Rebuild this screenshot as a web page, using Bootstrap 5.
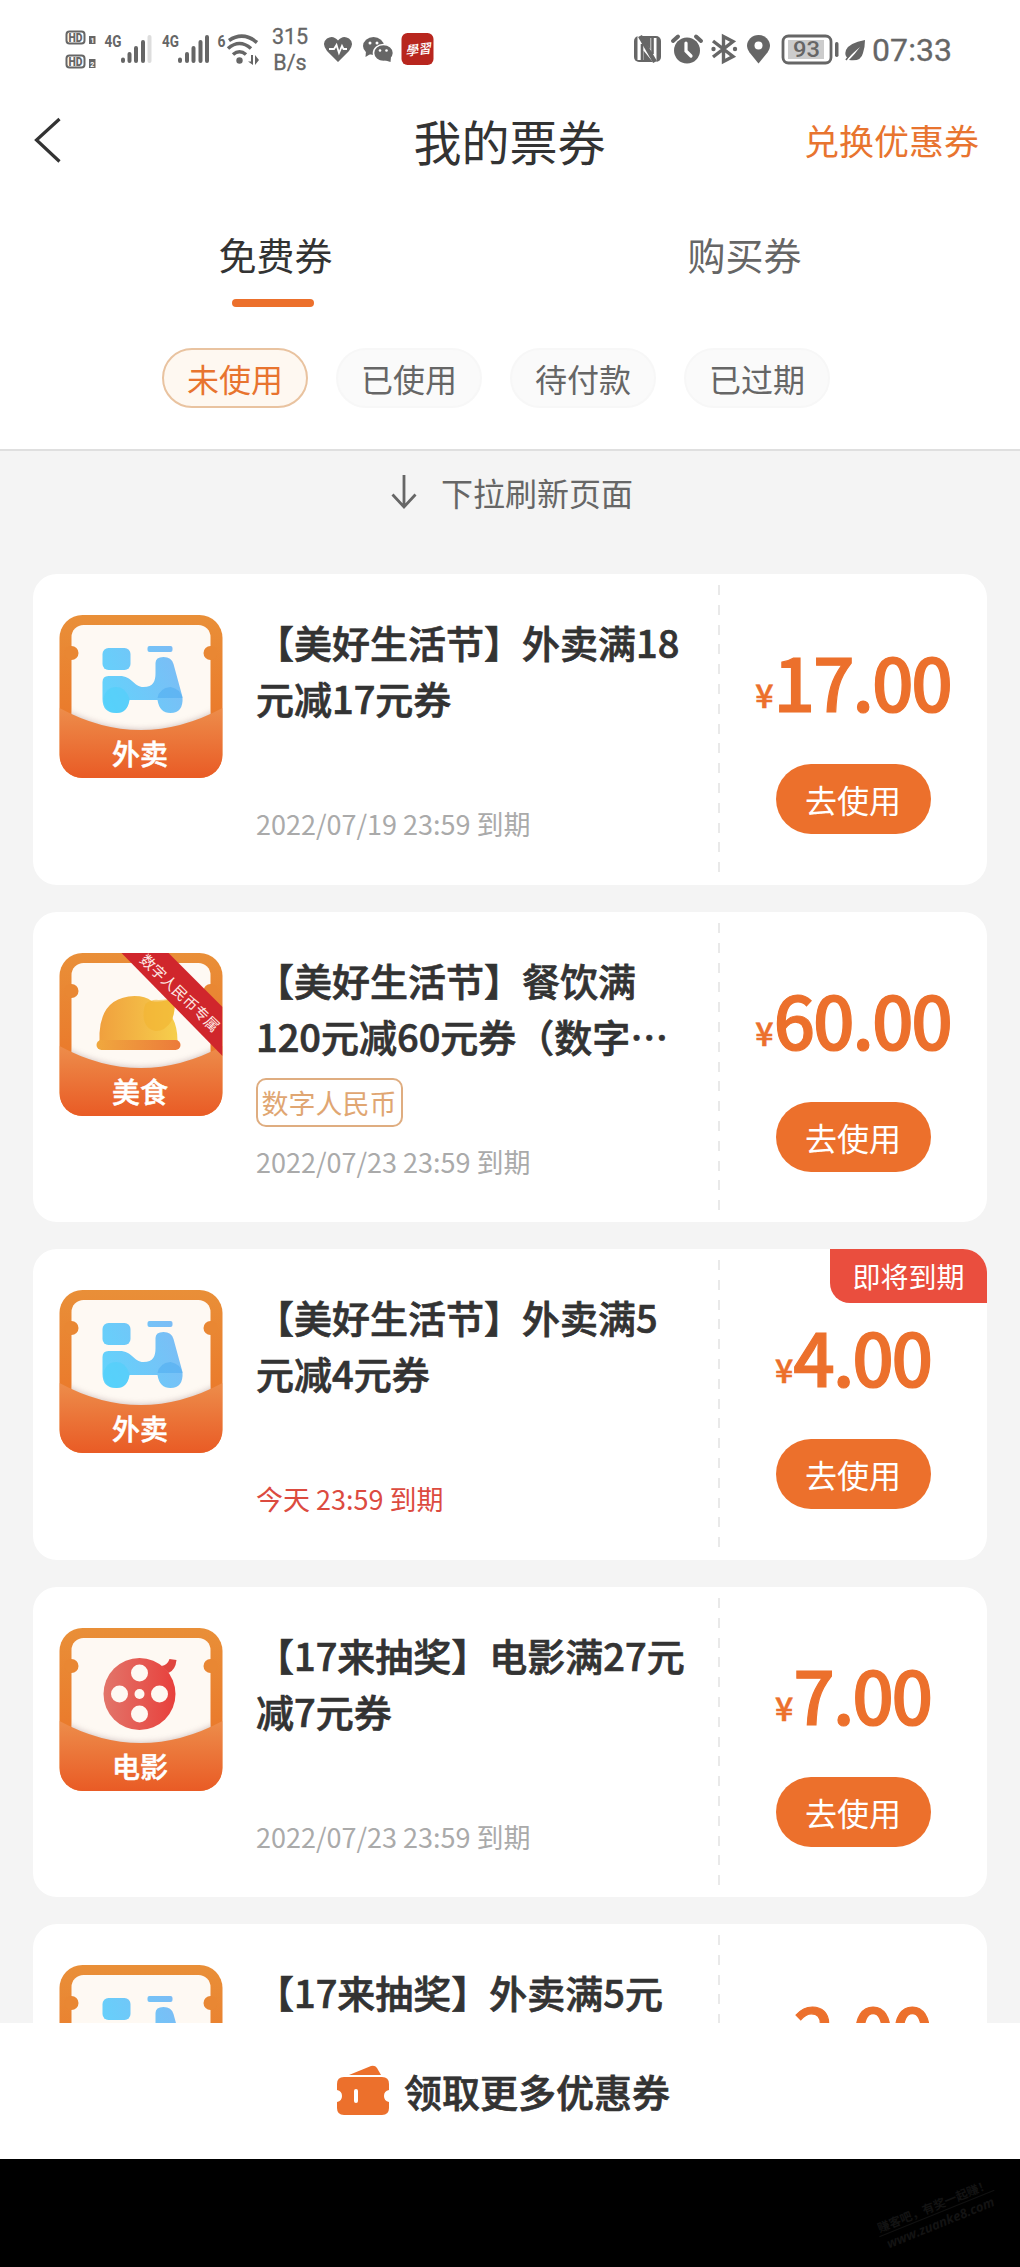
<!DOCTYPE html>
<html lang="zh-CN">
<head>
<meta charset="utf-8">
<meta name="viewport" content="width=device-width, initial-scale=1">
<title>我的票券</title>
<link href="https://cdn.jsdelivr.net/npm/bootstrap@5.3.0/dist/css/bootstrap.min.css" rel="stylesheet">
<style>
  body { width: 1020px; height: 2267px; overflow: hidden; background: #f4f4f4; color: #333;
    font-family: "Noto Sans CJK SC", "Noto Sans", sans-serif; line-height: 1; }
  svg { display: block; flex: none; }
  .statusbar { height: 100px; font-family: Roboto, sans-serif; color: #666; }
  .statusbar svg { fill: #666; }
  .statusbar svg text { font-family: "Roboto", sans-serif; }
  .net-speed { font-size: 21.5px; line-height: 25.5px; width: 40px; -webkit-text-stroke: .3px #666; }
  .clock { font-size: 32px; letter-spacing: .1px; -webkit-text-stroke: .3px #666; }
  .titlebar { height: 79px; display: grid; grid-template-columns: 1fr auto 1fr; padding: 0 41px 0 34px; }
  .titlebar h1 { font-size: 48px; font-weight: 400; line-height: 76px; padding-left: 6px; }
  .exchange { color: #e8742f; font-size: 35px; text-decoration: none; line-height: 76px; white-space: nowrap; }
  .tabs { padding: 0 41px; height: 169px; }
  .tabs a { width: 469px; font-size: 38px; line-height: 56px; padding-top: 47px; color: #666; text-decoration: none; text-align: center; }
  .tabs a.active { color: #333; }
  .tabs a.active::after { content: ""; display: block; width: 82px; height: 8px; border-radius: 4px; background: #ec702c; margin: 17px auto 0 191px; }
  .filters { gap: 28px; padding-left: 162px; height: 101px; }
  .pill { width: 146px; height: 60px; border-radius: 30px; font-size: 32px; line-height: 56px; padding: 0; text-align: center; background: #fafafa; border: 2px solid #f7f7f7; color: #666; }
  .pill.active { background: #fef8f1; border-color: #e9c3a0; color: #e8742f; }
  .topbox { height: 451px; border-bottom: 2px solid #dfdfdf; }
  .refresh { height: 123px; padding: 24px 0 0 391px; font-size: 32px; line-height: 34px; color: #666; }
  .coupons { height: 1449px; overflow: hidden; padding: 0 33px; }
  .coupon { height: 310.5px; flex: none; background: #fff; border-radius: 24px; margin-bottom: 27px; }
  .coupon-icon { margin: 41px 33px 0 26px; }
  .coupon-icon text { font-family: "Noto Sans CJK SC", sans-serif; }
  .tile-name { fill: #fff; font-size: 28px; font-weight: 500; text-anchor: middle; stroke: #fff; stroke-width: .5px; }
  .info { width: 462px; padding-top: 40px; height: 310px; }
  .info h2 { font-size: 38px; line-height: 56px; font-weight: 500; margin: 0; white-space: nowrap; height: 112px; -webkit-text-stroke: .7px #333; }
  .expire { font-size: 27px; line-height: 32px; color: #aaa; margin-bottom: 44px; }
  .expire.soon { color: #dc4b3f; }
  .digital { font-size: 27px; color: #e0a672; border: 2px solid #dfad80; border-radius: 10px; width: 147px; height: 49px; line-height: 46px; text-align: center; margin-top: 14px; text-indent: -1px; }
  .cutline { width: 2px; height: 290px; margin-top: 11px; background: repeating-linear-gradient(#e9e9e9 0 10px, transparent 10px 19.8px); }
  .pay { width: 266px; padding-top: 61px; }
  .price { color: #ec702c; font-weight: 500; height: 129px; line-height: 90px; white-space: nowrap; -webkit-text-stroke: 1.2px #ec702c; }
  .price small { font-size: 32px; position: relative; top: -4px; -webkit-text-stroke-width: .6px; }
  .price span { font-size: 73px; letter-spacing: -2.2px; }
  .use { background: #ec702c; color: #fff; border: 0; width: 155px; height: 70px; border-radius: 35px; font-size: 32px; line-height: 71px; padding: 0; font-weight: 400; }
  .use:hover { background: #ec702c; color: #fff; }
  .flag { top: 0; right: 0; width: 157px; height: 54px; background: #ea4e3e; color: #fff; font-size: 28px; line-height: 55px; border-radius: 0 24px 0 20px; text-align: center; }
  .more { height: 136px; background: #fff; padding-left: 337px; font-size: 38px; font-weight: 500; -webkit-text-stroke: .7px #333; }
  .wallet { margin-right: 14px; }
  .navarea { height: 108px; background: #000; position: relative; }
  .stamp { position: absolute; left: 875px; top: 37px; width: 124px; color: #131313; transform: rotate(-22deg); font-weight: 700; white-space: nowrap; text-align: center; }
  .stamp div:first-child { font-size: 12px; line-height: 17px; border-bottom: 1px solid #111; }
  .stamp div:last-child { font: italic 700 13px/18px "Open Sans", sans-serif; }
</style>
</head>
<body>
<svg width="0" height="0" class="position-absolute">
  <defs>
    <linearGradient id="gBack" x1="0" y1="0" x2="0" y2="1"><stop offset="0" stop-color="#e98f38"/><stop offset=".6" stop-color="#ea7b2c"/></linearGradient>
    <linearGradient id="gFront" x1="0" y1="0" x2="0" y2="1"><stop offset="0" stop-color="#ed8d4b"/><stop offset="1" stop-color="#e95b25"/></linearGradient>
    <linearGradient id="gBlue" gradientUnits="userSpaceOnUse" x1="43" y1="90" x2="124" y2="50"><stop offset="0" stop-color="#62d4fc"/><stop offset="1" stop-color="#7cbcf5"/></linearGradient>
    <linearGradient id="gFood" x1="0" y1="0" x2="1" y2="0"><stop offset="0" stop-color="#f0a03e"/><stop offset="1" stop-color="#f6cf4c"/></linearGradient>
    <linearGradient id="gPlate" x1="0" y1="0" x2="1" y2="0"><stop offset="0" stop-color="#f0a83e"/><stop offset="1" stop-color="#ec7a3a"/></linearGradient>
    <linearGradient id="gFilm" x1="0" y1="0" x2="1" y2="0"><stop offset="0" stop-color="#e2756a"/><stop offset="1" stop-color="#e8403c"/></linearGradient>
    <clipPath id="tile"><rect width="163" height="163" rx="23"/></clipPath>
    <clipPath id="card"><rect x="12" y="10" width="139" height="120" rx="12"/></clipPath>
    <filter id="soft" x="-10%" y="-30%" width="120%" height="160%"><feGaussianBlur stdDeviation="3"/></filter>
    <g id="ticketBack">
      <rect width="163" height="163" rx="23" fill="url(#gBack)"/>
      <rect x="12" y="10" width="139" height="120" rx="12" fill="#fef9f3"/>
      <circle cx="12" cy="38" r="7" fill="#e98733"/><circle cx="151" cy="38" r="7" fill="#e98733"/>
      <g clip-path="url(#card)"><path d="M0 93Q81 137 163 93V130H0Z" fill="#b9a5a5" opacity=".75" filter="url(#soft)"/></g>
    </g>
    <g id="ticketFront" clip-path="url(#tile)"><path d="M0 93Q81 137 163 93V163H0Z" fill="url(#gFront)"/></g>
    <g id="scooter" fill="url(#gBlue)">
      <rect x="43" y="33" width="28" height="22" rx="6"/>
      <rect x="88" y="31" width="25" height="6" rx="2"/>
      <path d="M49 61H60C73 61 74 72 84 72C94 72 96 66 96 58V48Q96 42 104 42Q112 42 114 49L123 82Q124 98 111 98Q100 98 98 85H70Q68 98 57 98Q43 98 43 84V67Q43 61 49 61Z"/>
      <path d="M44 84Q46 72 57 72Q66 72 70 84Q68 98 57 98Q45 98 44 84Z" fill="#4cd0fa" opacity=".55"/>
      <path d="M98 83Q100 73 111 72Q121 74 123 83Z" fill="#4aa9ef" opacity=".5"/>
    </g>
  </defs>
</svg>

<main class="topbox bg-white">
  <div class="statusbar d-flex align-items-start">
    <svg width="32" height="100" viewBox="64 0 32 100" style="margin-left:64px">
      <g fill="none" stroke="#666" stroke-width="2"><rect x="66.500" y="31.500" width="18" height="12" rx="3"/><rect x="66.500" y="55.500" width="18" height="12" rx="3"/></g>
      <text x="68.500" y="42" font-size="12" font-weight="900" textLength="14" lengthAdjust="spacingAndGlyphs">HD</text><text x="68.500" y="66" font-size="12" font-weight="900" textLength="14" lengthAdjust="spacingAndGlyphs">HD</text>
      <rect x="89" y="36" width="6.500" height="8"/><rect x="89" y="59" width="6.500" height="9"/>
      <text x="90.500" y="42.800" font-size="7" font-weight="700" style="fill:#fff">1</text><text x="90.200" y="66.500" font-size="7" font-weight="700" style="fill:#fff">2</text>
    </svg>
    <svg width="57" height="100" viewBox="96 0 57 100">
      <text x="104.500" y="47" font-size="16.500" font-weight="700" textLength="17" lengthAdjust="spacingAndGlyphs">4G</text>
      <g stroke="#666" stroke-width="4" stroke-linecap="round"><path d="M123 59.500V61M129.500 54V61M136 48V61M143 42V61"/><path d="M149.500 37V61" stroke="#ddd"/></g>
    </svg>
    <svg width="59" height="100" viewBox="153 0 59 100">
      <text x="162" y="47" font-size="16.500" font-weight="700" textLength="17" lengthAdjust="spacingAndGlyphs">4G</text>
      <g stroke="#666" stroke-width="4" stroke-linecap="round"><path d="M180 59.500V61M187 54V61M193.500 48V61M200.500 42V61M207 37V61"/></g>
    </svg>
    <svg width="58" height="100" viewBox="212 0 58 100">
      <text x="217.500" y="46.500" font-size="16.500" font-weight="700" textLength="8" lengthAdjust="spacingAndGlyphs">6</text>
      <circle cx="239.500" cy="60.500" r="3.200"/>
      <g fill="none" stroke="#666" stroke-width="3.600"><path d="M233 54.500Q239.500 49 246 54.500"/><path d="M228 48.500Q239.500 38.500 251 48.500"/><path d="M229 40.500Q243 31 257 42.500"/></g>
      <path d="M253 55V65L248 61.500H251V55ZM255 65V55L259 60Z"/>
    </svg>
    <div class="net-speed text-center" style="margin-top:24px">315<br>B/s</div>
    <svg width="51" height="100" viewBox="310 0 51 100">
      <path d="M338 62L327 51Q321 43 327 38.500Q333 34.500 338 40.500Q343 34.500 349 38.500Q355 43 349 51Z"/>
      <path d="M329 49H334L336.500 45L339 53L342 46L343.500 49H347" fill="none" stroke="#fff" stroke-width="1.800"/>
    </svg>
    <svg width="35" height="100" viewBox="361 0 35 100">
      <ellipse cx="373.500" cy="46" rx="10.500" ry="9"/><path d="M366 51L365.500 57L372 53Z"/>
      <ellipse cx="383.500" cy="53" rx="10" ry="8.500" stroke="#fff" stroke-width="1.600"/><path d="M384 60L391 57L390.500 62Z"/>
      <g fill="#fff"><circle cx="370" cy="43" r="1.500"/><circle cx="377" cy="43" r="1.500"/><circle cx="380" cy="50.500" r="1.300"/><circle cx="386.500" cy="50.500" r="1.300"/></g>
    </svg>
    <svg width="38" height="100" viewBox="396 0 38 100">
      <rect x="401.500" y="33" width="32" height="32" rx="6" fill="#b8261e"/>
      <text x="405" y="54.500" font-size="13" font-weight="500" transform="rotate(-7 417 50)" style="fill:#fff;font-family:'Noto Sans CJK SC',sans-serif;font-style:italic">學習</text>
    </svg>
    <svg width="36" height="100" viewBox="630 0 36 100" style="margin-left:196px">
      <rect x="634" y="36" width="27" height="26" rx="5"/>
      <path d="M640.500 60V42L653.500 58V38" fill="none" stroke="#fff" stroke-width="6"/><path d="M642 62V44M652.500 36V54" stroke="#666" stroke-width="2.600"/><path d="M640 36L655 62" stroke="#666" stroke-width="4.500"/>
    </svg>
    <svg width="40" height="100" viewBox="666 0 40 100">
      <circle cx="687" cy="50.500" r="13"/><path d="M673 41L678 36.500M701 41L696 36.500" stroke="#666" stroke-width="4" stroke-linecap="round"/>
      <path d="M686 43V51L691 56" fill="none" stroke="#fff" stroke-width="3.200" stroke-linecap="round"/>
    </svg>
    <svg width="36" height="100" viewBox="706 0 36 100">
      <path d="M713 41L733 56.500L723.500 61.500V36.500L733 41.500L713 57" fill="none" stroke="#666" stroke-width="3.400"/>
      <circle cx="713.500" cy="49" r="2.200"/><circle cx="735" cy="49" r="2.200"/>
    </svg>
    <svg width="32" height="100" viewBox="742 0 32 100">
      <path d="M758.500 63.500L749.500 52.500Q747 49 747 46A11.500 11 0 0 1 770 46Q770 49 767.500 52.500Z"/><circle cx="758.500" cy="45.500" r="4" style="fill:#fff"/>
    </svg>
    <svg width="67" height="100" viewBox="774 0 67 100">
      <rect x="783" y="36" width="48" height="27" rx="5.500" fill="none" stroke="#666" stroke-width="2.800" style="fill:#fff"/>
      <rect x="788" y="40" width="36" height="19" style="fill:#ccc"/>
      <text x="793" y="56.500" font-size="22.500" font-weight="500" textLength="27" lengthAdjust="spacingAndGlyphs">93</text>
      <rect x="835" y="42" width="3.500" height="15" rx="1.700"/>
    </svg>
    <svg width="31" height="100" viewBox="841 0 31 100">
      <path d="M865 40Q849 43 846 50Q844 56 848 58Q854 52 860 47Q855 54 849 60Q861 62 863 53Q865 47 865 40Z"/>
      <path d="M846 60Q848 57 850 55" stroke="#666" stroke-width="1.600"/>
    </svg>
    <div class="clock" style="margin-top:34px">07:33</div>
  </div>

  <header class="titlebar align-items-center">
    <svg width="32" height="50" viewBox="0 0 32 50"><path d="M25.500 4L2.500 25L25.500 46.500" fill="none" stroke="#333" stroke-width="3.200"/></svg>
    <h1 class="mb-0">我的票券</h1>
    <a href="#" class="exchange text-end">兑换优惠券</a>
  </header>

  <nav class="tabs d-flex">
    <a href="#" class="active">免费券</a>
    <a href="#">购买券</a>
  </nav>

  <div class="filters d-flex">
    <button class="pill active">未使用</button>
    <button class="pill">已使用</button>
    <button class="pill">待付款</button>
    <button class="pill">已过期</button>
  </div>
</main>

<div class="refresh d-flex">
  <svg width="26" height="36" viewBox="0 0 26 36" class="me-4"><path d="M13 0V31M1.500 19.500L13 32L24.500 19.500" fill="none" stroke="#666" stroke-width="2.800"/></svg>
  <span>下拉刷新页面</span>
</div>

<section class="coupons d-flex flex-column">
  <article class="coupon d-flex">
    <svg class="coupon-icon" width="164" height="163" viewBox="0 0 163 163"><use href="#ticketBack"/><use href="#scooter"/><use href="#ticketFront"/><text class="tile-name" x="80.500" y="150">外卖</text></svg>
    <div class="info d-flex flex-column justify-content-between"><h2>【美好生活节】外卖满18<br>元减17元券</h2><div class="expire">2022/07/19 23:59 到期</div></div>
    <div class="cutline"></div>
    <div class="pay text-center"><div class="price"><small>¥</small><span>17.00</span></div><button class="use btn">去使用</button></div>
  </article>

  <article class="coupon d-flex">
    <svg class="coupon-icon" width="164" height="163" viewBox="0 0 163 163"><use href="#ticketBack"/>
      <path d="M40 88V80Q42 44 75 43Q86 43 92 48Q104 50 115 44Q116 58 113 65Q118 74 118 88Z" fill="url(#gFood)"/>
      <path d="M86 51Q92 46 99 47Q109 47 115 44Q116 58 112 68Q106 78 96 78Q85 76 84 63Q84 55 86 51Z" fill="#f2b431" opacity=".6"/>
      <rect x="37" y="87" width="84" height="10" rx="5" fill="url(#gPlate)"/>
      <use href="#ticketFront"/>
      <g clip-path="url(#tile)"><path d="M62 0H109L163 54V103Z" fill="#d0262c"/></g>
      <text transform="translate(120.500 40) rotate(44)" x="0" y="5.500" text-anchor="middle" font-size="14.800" fill="#fde8e4">数字人民币专属</text>
      <text class="tile-name" x="80.500" y="150">美食</text></svg>
    <div class="info d-flex flex-column"><h2>【美好生活节】餐饮满<br>120元减60元券（数字…</h2><div class="digital">数字人民币</div><div class="expire mt-auto">2022/07/23 23:59 到期</div></div>
    <div class="cutline"></div>
    <div class="pay text-center"><div class="price"><small>¥</small><span>60.00</span></div><button class="use btn">去使用</button></div>
  </article>

  <article class="coupon d-flex position-relative">
    <svg class="coupon-icon" width="164" height="163" viewBox="0 0 163 163"><use href="#ticketBack"/><use href="#scooter"/><use href="#ticketFront"/><text class="tile-name" x="80.500" y="150">外卖</text></svg>
    <div class="info d-flex flex-column justify-content-between"><h2>【美好生活节】外卖满5<br>元减4元券</h2><div class="expire soon">今天 23:59 到期</div></div>
    <div class="cutline"></div>
    <div class="pay text-center"><div class="price"><small>¥</small><span>4.00</span></div><button class="use btn">去使用</button></div>
    <div class="flag position-absolute">即将到期</div>
  </article>

  <article class="coupon d-flex">
    <svg class="coupon-icon" width="164" height="163" viewBox="0 0 163 163"><use href="#ticketBack"/>
      <path d="M102 38Q108 37 110 31L117 32Q116 42 109 45Z" fill="#e0463f"/>
      <circle cx="80" cy="66" r="36" fill="url(#gFilm)"/>
      <g fill="#fef9f3"><circle cx="80" cy="45" r="8.500"/><circle cx="60" cy="66" r="8.500"/><circle cx="100" cy="66" r="8.500"/><circle cx="80" cy="86" r="8.500"/><circle cx="80" cy="66" r="5"/></g>
      <use href="#ticketFront"/><text class="tile-name" x="80.500" y="150">电影</text></svg>
    <div class="info d-flex flex-column justify-content-between"><h2>【17来抽奖】电影满27元<br>减7元券</h2><div class="expire">2022/07/23 23:59 到期</div></div>
    <div class="cutline"></div>
    <div class="pay text-center"><div class="price"><small>¥</small><span>7.00</span></div><button class="use btn">去使用</button></div>
  </article>

  <article class="coupon d-flex">
    <svg class="coupon-icon" width="164" height="163" viewBox="0 0 163 163"><use href="#ticketBack"/><use href="#scooter"/><use href="#ticketFront"/></svg>
    <div class="info"><h2>【17来抽奖】外卖满5元</h2></div>
    <div class="cutline"></div>
    <div class="pay text-center"><div class="price"><small>¥</small><span>2.00</span></div></div>
  </article>
</section>

<footer>
  <div class="more d-flex align-items-center">
    <svg width="53" height="52" viewBox="0 0 53 52" class="wallet"><path d="M12 10L34 1Q38 0 40 3L44 10Z" fill="#ec702c"/><path d="M7 12H45Q52 12 52 19V25Q47 26 47 31Q47 36 52 37V43Q52 50 45 50H7Q0 50 0 43V37Q5 36 5 31Q5 26 0 25V19Q0 12 7 12Z" fill="#ec702c"/><rect x="17" y="24" width="4" height="14" rx="2" fill="#fff"/></svg>
    <span>领取更多优惠券</span>
  </div>
  <div class="navarea"><div class="stamp"><div>赚客吧，有奖一起赚！</div><div>www.zuanke8.com</div></div></div>
</footer>
<script src="https://cdn.jsdelivr.net/npm/bootstrap@5.3.0/dist/js/bootstrap.bundle.min.js"></script>
</body>
</html>
